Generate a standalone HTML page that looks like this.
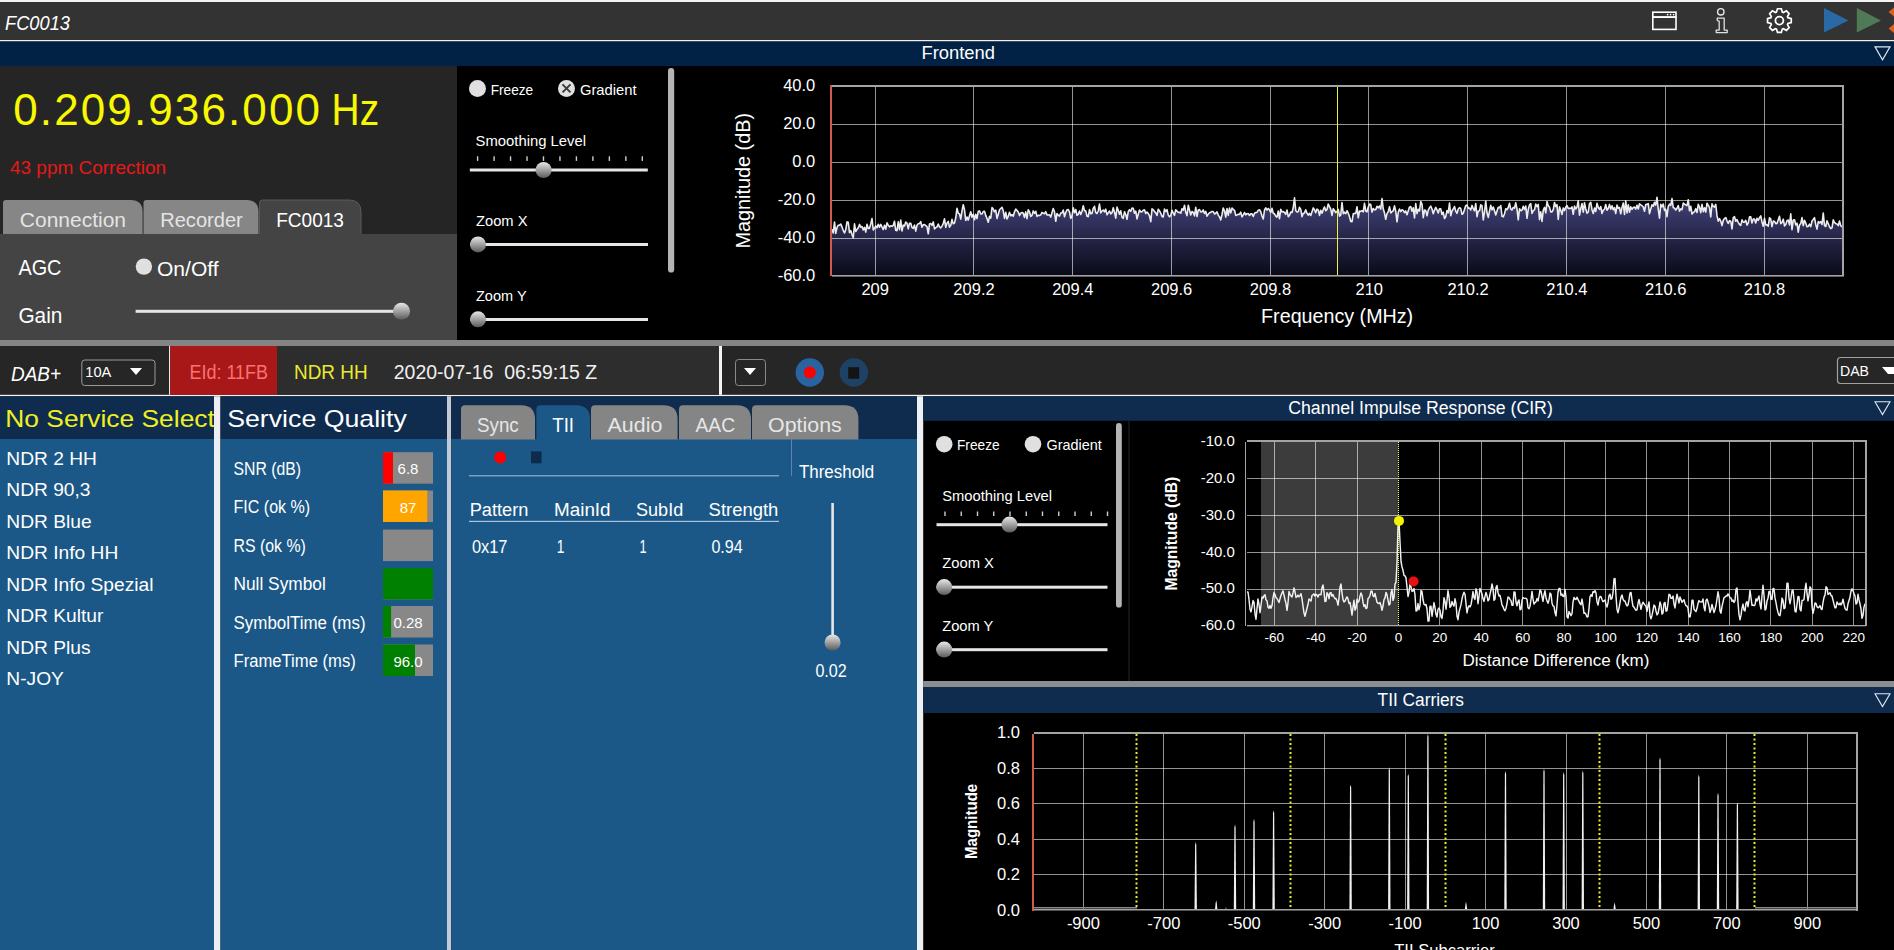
<!DOCTYPE html>
<html><head><meta charset="utf-8"><style>
html,body{margin:0;padding:0;background:#000;overflow:hidden;}
svg{display:block;font-family:"Liberation Sans",sans-serif;}
</style></head><body>
<svg width="1894" height="950" viewBox="0 0 1894 950">
<rect x="0" y="0" width="1894" height="950" fill="#000" />
<rect x="0" y="0" width="1894" height="2" fill="#f4f4f4" />
<rect x="0" y="2" width="1894" height="38" fill="#333333" />
<rect x="0" y="40" width="1894" height="1.5" fill="#f0f0f0" />
<text x="5" y="30" font-size="19.5" fill="#fff" text-anchor="start" font-weight="normal" font-style="italic" textLength="65" lengthAdjust="spacingAndGlyphs" >FC0013</text>
<rect x="1652.8" y="12.2" width="23.2" height="17.2" fill="none" stroke="#fff" stroke-width="1.6"/>
<rect x="1652.5" y="16.1" width="24" height="1.9" fill="#fff" />
<circle cx="1667.6" cy="14.6" r="0.85" fill="#fff" />
<circle cx="1670.6" cy="14.6" r="0.85" fill="#fff" />
<circle cx="1673.6" cy="14.6" r="0.85" fill="#fff" />
<circle cx="1720.8" cy="11.8" r="3.2" fill="none" stroke="#e8e8e8" stroke-width="1.4"/>
<path d="M1717.2 18.2 H1724.2 V30.1 H1727.2 V32.6 H1716.2 V30.1 H1719.2 V21.2 Q1717.2 21.2 1717.2 19.6 Z" fill="none" stroke="#e0e0e0" stroke-width="1.3" stroke-linejoin="round"/>
<path d="M1776.48 12.09 L1777.49 8.75 L1781.31 8.75 L1782.32 12.09 L1783.36 12.52 L1786.43 10.87 L1789.13 13.57 L1787.48 16.64 L1787.91 17.68 L1791.25 18.69 L1791.25 22.51 L1787.91 23.52 L1787.48 24.56 L1789.13 27.63 L1786.43 30.33 L1783.36 28.68 L1782.32 29.11 L1781.31 32.45 L1777.49 32.45 L1776.48 29.11 L1775.44 28.68 L1772.37 30.33 L1769.67 27.63 L1771.32 24.56 L1770.89 23.52 L1767.55 22.51 L1767.55 18.69 L1770.89 17.68 L1771.32 16.64 L1769.67 13.57 L1772.37 10.87 L1775.44 12.52 Z" fill="none" stroke="#fff" stroke-width="1.7" stroke-linejoin="miter"/>
<circle cx="1779.4" cy="20.6" r="4" fill="none" stroke="#fff" stroke-width="1.8"/>
<path d="M1824 8 L1848.5 20.5 L1824 32.6 Z" fill="#2969a5"/>
<path d="M1856.8 8 L1881 20.5 L1856.8 32.6 Z" fill="#4f7a55"/>
<path d="M1894 7.5 L1888.6 12 L1894 16.5 Z M1894 24 L1888.6 28.5 L1894 33 Z" fill="#e0601a"/>
<rect x="0" y="41.5" width="1894" height="24.5" fill="#012244" />
<text x="921.5" y="58.6" font-size="18" fill="#fff" text-anchor="start" font-weight="normal" font-style="normal" textLength="73.5" lengthAdjust="spacingAndGlyphs" >Frontend</text>
<path d="M1875 46.8 L1890 46.8 L1882.5 59.8 Z" fill="none" stroke="#dfe6ee" stroke-width="1.2"/>
<rect x="0" y="66" width="457" height="274" fill="#252525" />
<text x="13.2" y="124.7" font-size="44" fill="#f8f800" textLength="306.8" lengthAdjust="spacing">0.209.936.000</text>
<text x="331.6" y="124.7" font-size="44" fill="#f8f800" text-anchor="start" font-weight="normal" font-style="normal" textLength="47.6" lengthAdjust="spacingAndGlyphs" >Hz</text>
<text x="10" y="174" font-size="18" fill="#e81818" text-anchor="start" font-weight="normal" font-style="normal" textLength="156" lengthAdjust="spacingAndGlyphs" >43 ppm Correction</text>
<path d="M3 234 L3 203 Q3 200 6 200 L130.6 200 Q142.6 200 142.6 212 L142.6 234 Z" fill="#868686"/>
<path d="M143.5 234 L143.5 203 Q143.5 200 146.5 200 L246.5 200 Q258.5 200 258.5 212 L258.5 234 Z" fill="#868686"/>
<rect x="0" y="234" width="457" height="106" fill="#444444" />
<path d="M259.5 234 L259.5 203 Q259.5 200 262.5 200 L349 200 Q361 200 361 212 L361 234 Z" fill="#444444" stroke="#5a5a5a" stroke-width="1"/>
<rect x="260" y="232" width="100.5" height="3" fill="#444444" />
<text x="19.8" y="227.3" font-size="20" fill="#e4e4e4" text-anchor="start" font-weight="normal" font-style="normal" textLength="106.2" lengthAdjust="spacingAndGlyphs" >Connection</text>
<text x="160.2" y="227.3" font-size="20" fill="#e4e4e4" text-anchor="start" font-weight="normal" font-style="normal" textLength="82.6" lengthAdjust="spacingAndGlyphs" >Recorder</text>
<text x="276.2" y="227.3" font-size="20" fill="#ffffff" text-anchor="start" font-weight="normal" font-style="normal" textLength="67.7" lengthAdjust="spacingAndGlyphs" >FC0013</text>
<text x="18.4" y="275" font-size="22" fill="#fff" text-anchor="start" font-weight="normal" font-style="normal" textLength="43.1" lengthAdjust="spacingAndGlyphs" >AGC</text>
<text x="18.4" y="323" font-size="22" fill="#fff" text-anchor="start" font-weight="normal" font-style="normal" textLength="44" lengthAdjust="spacingAndGlyphs" >Gain</text>
<circle cx="143.9" cy="266.6" r="8.2" fill="#e0e0e0" />
<text x="157" y="276" font-size="20" fill="#fff" text-anchor="start" font-weight="normal" font-style="normal" textLength="61.6" lengthAdjust="spacingAndGlyphs" >On/Off</text>
<rect x="135.6" y="309.8" width="265" height="3" fill="#e6e6e6" />
<defs><linearGradient id="thumb" x1="0" y1="0" x2="0" y2="1"><stop offset="0" stop-color="#e8e8e8"/><stop offset="1" stop-color="#5a5a5a"/></linearGradient><linearGradient id="specfill" x1="0" y1="0" x2="0" y2="1"><stop offset="0" stop-color="#43437c"/><stop offset="1" stop-color="#0a0a18"/></linearGradient></defs>
<circle cx="401.5" cy="311.2" r="8.5" fill="url(#thumb)"/>
<circle cx="477.5" cy="88.4" r="8.5" fill="#e0e0e0" />
<text x="490.7" y="94.9" font-size="15" fill="#fff" text-anchor="start" font-weight="normal" font-style="normal" textLength="42.5" lengthAdjust="spacingAndGlyphs" >Freeze</text>
<circle cx="566.5" cy="88.4" r="8.5" fill="#e0e0e0" />
<path d="M562.5 84.4 L570.5 92.4 M570.5 84.4 L562.5 92.4" stroke="#3a3a3a" stroke-width="2"/>
<text x="579.9" y="94.9" font-size="15" fill="#fff" text-anchor="start" font-weight="normal" font-style="normal" textLength="56.7" lengthAdjust="spacingAndGlyphs" >Gradient</text>
<text x="475.6" y="145.9" font-size="15" fill="#fff" text-anchor="start" font-weight="normal" font-style="normal" textLength="110.4" lengthAdjust="spacingAndGlyphs" >Smoothing Level</text>
<rect x="476.90000000000003" y="156.3" width="1.4" height="4.6" fill="#cfcfcf" />
<rect x="493.37000000000006" y="156.3" width="1.4" height="4.6" fill="#cfcfcf" />
<rect x="509.84000000000003" y="156.3" width="1.4" height="4.6" fill="#cfcfcf" />
<rect x="526.31" y="156.3" width="1.4" height="4.6" fill="#cfcfcf" />
<rect x="542.78" y="156.3" width="1.4" height="4.6" fill="#cfcfcf" />
<rect x="559.25" y="156.3" width="1.4" height="4.6" fill="#cfcfcf" />
<rect x="575.72" y="156.3" width="1.4" height="4.6" fill="#cfcfcf" />
<rect x="592.1899999999999" y="156.3" width="1.4" height="4.6" fill="#cfcfcf" />
<rect x="608.66" y="156.3" width="1.4" height="4.6" fill="#cfcfcf" />
<rect x="625.13" y="156.3" width="1.4" height="4.6" fill="#cfcfcf" />
<rect x="641.5999999999999" y="156.3" width="1.4" height="4.6" fill="#cfcfcf" />
<rect x="469.8" y="168.5" width="178" height="3" fill="#e6e6e6" />
<circle cx="543.6" cy="170" r="8" fill="url(#thumb)"/>
<text x="476" y="225.9" font-size="15" fill="#fff" text-anchor="start" font-weight="normal" font-style="normal" textLength="51.5" lengthAdjust="spacingAndGlyphs" >Zoom X</text>
<rect x="470" y="243" width="178" height="3" fill="#e6e6e6" />
<circle cx="478" cy="244.4" r="8" fill="url(#thumb)"/>
<text x="476" y="301" font-size="15" fill="#fff" text-anchor="start" font-weight="normal" font-style="normal" textLength="50.6" lengthAdjust="spacingAndGlyphs" >Zoom Y</text>
<rect x="470" y="318" width="178" height="3" fill="#e6e6e6" />
<circle cx="478" cy="319.3" r="8" fill="url(#thumb)"/>
<rect x="668" y="68" width="6.2" height="204.5" rx="3.1" fill="#b4b4b4"/>
<polygon points="832,275.3 832.00,229.2 833.25,232.9 834.50,222.0 835.75,233.4 837.00,227.7 838.25,225.2 839.50,225.1 840.75,224.1 842.00,226.9 843.25,230.4 844.50,233.0 845.75,229.7 847.00,221.9 848.25,222.3 849.50,232.6 850.75,230.6 852.00,234.6 853.25,237.8 854.50,223.9 855.75,231.5 857.00,229.3 858.25,227.9 859.50,224.4 860.75,227.1 862.00,226.5 863.25,229.9 864.50,227.4 865.75,232.1 867.00,224.3 868.25,228.4 869.50,228.4 870.75,223.9 872.00,218.5 873.25,230.0 874.50,228.3 875.75,226.0 877.00,227.8 878.25,224.3 879.50,227.2 880.75,224.4 882.00,227.0 883.25,229.6 884.50,225.2 885.75,229.1 887.00,222.8 888.25,225.2 889.50,226.8 890.75,225.8 892.00,226.3 893.25,225.4 894.50,221.3 895.75,230.3 897.00,230.6 898.25,221.8 899.50,229.7 900.75,220.1 902.00,231.0 903.25,225.1 904.50,226.0 905.75,222.1 907.00,223.2 908.25,228.8 909.50,223.2 910.75,223.3 912.00,227.6 913.25,228.4 914.50,225.1 915.75,231.2 917.00,225.2 918.25,223.7 919.50,223.5 920.75,221.7 922.00,227.2 923.25,224.8 924.50,224.5 925.75,225.6 927.00,226.7 928.25,233.8 929.50,223.9 930.75,223.5 932.00,225.4 933.25,221.9 934.50,228.9 935.75,227.7 937.00,226.9 938.25,224.1 939.50,226.9 940.75,227.9 942.00,226.1 943.25,223.5 944.50,218.8 945.75,227.4 947.00,223.1 948.25,221.4 949.50,227.1 950.75,225.3 952.00,219.4 953.25,223.7 954.50,223.1 955.75,217.8 957.00,208.2 958.25,213.2 959.50,214.0 960.75,219.1 962.00,210.9 963.25,204.7 964.50,209.8 965.75,220.5 967.00,217.0 968.25,220.1 969.50,215.7 970.75,211.7 972.00,217.2 973.25,214.3 974.50,219.8 975.75,214.3 977.00,218.5 978.25,211.3 979.50,210.9 980.75,214.0 982.00,214.0 983.25,211.5 984.50,211.3 985.75,215.4 987.00,218.6 988.25,222.3 989.50,216.4 990.75,218.2 992.00,207.5 993.25,209.1 994.50,211.8 995.75,210.1 997.00,218.5 998.25,214.3 999.50,209.8 1000.75,208.5 1002.00,207.3 1003.25,210.8 1004.50,218.4 1005.75,212.2 1007.00,219.0 1008.25,216.3 1009.50,212.3 1010.75,215.8 1012.00,214.6 1013.25,216.2 1014.50,211.8 1015.75,209.1 1017.00,210.5 1018.25,212.0 1019.50,215.6 1020.75,213.1 1022.00,212.5 1023.25,213.2 1024.50,217.4 1025.75,211.9 1027.00,218.7 1028.25,209.7 1029.50,211.8 1030.75,216.5 1032.00,215.4 1033.25,210.9 1034.50,213.3 1035.75,211.3 1037.00,216.4 1038.25,215.4 1039.50,215.5 1040.75,214.9 1042.00,212.4 1043.25,213.3 1044.50,213.8 1045.75,211.7 1047.00,214.9 1048.25,215.0 1049.50,214.9 1050.75,217.1 1052.00,212.6 1053.25,208.6 1054.50,211.8 1055.75,221.3 1057.00,213.5 1058.25,215.3 1059.50,216.1 1060.75,213.0 1062.00,213.0 1063.25,210.1 1064.50,216.8 1065.75,212.5 1067.00,209.8 1068.25,209.6 1069.50,211.9 1070.75,218.4 1072.00,215.8 1073.25,207.7 1074.50,212.8 1075.75,209.5 1077.00,215.3 1078.25,214.3 1079.50,211.1 1080.75,214.5 1082.00,211.3 1083.25,205.8 1084.50,210.8 1085.75,210.9 1087.00,216.3 1088.25,216.6 1089.50,209.6 1090.75,213.7 1092.00,213.4 1093.25,208.3 1094.50,206.3 1095.75,212.7 1097.00,213.5 1098.25,211.0 1099.50,204.0 1100.75,212.9 1102.00,211.0 1103.25,210.0 1104.50,211.9 1105.75,209.2 1107.00,214.8 1108.25,212.9 1109.50,211.0 1110.75,213.8 1112.00,212.7 1113.25,207.8 1114.50,212.4 1115.75,218.1 1117.00,207.1 1118.25,210.6 1119.50,214.2 1120.75,210.7 1122.00,217.4 1123.25,218.3 1124.50,211.7 1125.75,214.5 1127.00,219.3 1128.25,211.6 1129.50,209.7 1130.75,211.3 1132.00,208.1 1133.25,208.2 1134.50,213.3 1135.75,211.2 1137.00,218.9 1138.25,214.2 1139.50,210.0 1140.75,211.9 1142.00,211.7 1143.25,210.3 1144.50,209.8 1145.75,213.5 1147.00,212.0 1148.25,213.6 1149.50,215.8 1150.75,221.7 1152.00,208.8 1153.25,209.6 1154.50,211.6 1155.75,212.8 1157.00,215.5 1158.25,209.2 1159.50,210.9 1160.75,213.2 1162.00,216.4 1163.25,216.9 1164.50,209.0 1165.75,211.6 1167.00,209.6 1168.25,215.1 1169.50,216.8 1170.75,215.4 1172.00,210.2 1173.25,213.2 1174.50,215.4 1175.75,209.7 1177.00,211.1 1178.25,212.5 1179.50,212.2 1180.75,213.2 1182.00,208.8 1183.25,210.1 1184.50,205.2 1185.75,212.3 1187.00,215.6 1188.25,205.3 1189.50,210.0 1190.75,215.0 1192.00,211.5 1193.25,212.4 1194.50,215.8 1195.75,207.3 1197.00,216.5 1198.25,210.0 1199.50,209.6 1200.75,212.0 1202.00,211.8 1203.25,209.9 1204.50,213.5 1205.75,211.4 1207.00,216.2 1208.25,214.2 1209.50,212.7 1210.75,212.3 1212.00,211.5 1213.25,211.5 1214.50,214.0 1215.75,213.3 1217.00,211.9 1218.25,215.1 1219.50,216.9 1220.75,219.9 1222.00,214.5 1223.25,208.0 1224.50,210.8 1225.75,217.2 1227.00,208.5 1228.25,215.4 1229.50,208.1 1230.75,212.9 1232.00,208.1 1233.25,209.5 1234.50,210.3 1235.75,215.4 1237.00,214.9 1238.25,214.3 1239.50,214.4 1240.75,212.1 1242.00,216.9 1243.25,214.9 1244.50,212.5 1245.75,214.8 1247.00,213.7 1248.25,213.6 1249.50,215.5 1250.75,213.8 1252.00,213.9 1253.25,216.5 1254.50,213.2 1255.75,212.5 1257.00,212.4 1258.25,210.2 1259.50,209.8 1260.75,211.7 1262.00,216.0 1263.25,218.9 1264.50,210.0 1265.75,207.8 1267.00,210.1 1268.25,208.5 1269.50,209.8 1270.75,212.5 1272.00,208.2 1273.25,213.2 1274.50,213.8 1275.75,216.1 1277.00,217.1 1278.25,211.0 1279.50,218.6 1280.75,209.4 1282.00,212.0 1283.25,211.6 1284.50,212.5 1285.75,214.4 1287.00,210.0 1288.25,216.7 1289.50,215.2 1290.75,212.1 1292.00,212.5 1293.25,207.8 1294.50,197.9 1295.75,210.7 1297.00,212.0 1298.25,211.7 1299.50,207.3 1300.75,209.4 1302.00,216.7 1303.25,213.3 1304.50,212.9 1305.75,209.8 1307.00,213.3 1308.25,215.1 1309.50,213.3 1310.75,215.5 1312.00,211.7 1313.25,207.9 1314.50,209.8 1315.75,212.7 1317.00,209.0 1318.25,210.0 1319.50,215.4 1320.75,210.2 1322.00,213.2 1323.25,209.7 1324.50,206.9 1325.75,210.7 1327.00,209.5 1328.25,204.0 1329.50,206.7 1330.75,209.2 1332.00,215.4 1333.25,208.7 1334.50,210.5 1335.75,212.6 1337.00,211.5 1338.25,209.4 1339.50,216.1 1340.75,214.9 1342.00,202.5 1343.25,213.6 1344.50,212.2 1345.75,213.7 1347.00,210.7 1348.25,213.1 1349.50,216.7 1350.75,221.5 1352.00,221.6 1353.25,213.8 1354.50,213.4 1355.75,213.4 1357.00,206.7 1358.25,217.8 1359.50,211.1 1360.75,211.4 1362.00,210.7 1363.25,211.8 1364.50,203.3 1365.75,211.0 1367.00,211.9 1368.25,207.0 1369.50,204.1 1370.75,204.6 1372.00,212.1 1373.25,208.6 1374.50,209.8 1375.75,209.6 1377.00,206.3 1378.25,207.8 1379.50,206.0 1380.75,209.1 1382.00,198.5 1383.25,208.8 1384.50,213.0 1385.75,219.3 1387.00,213.7 1388.25,211.6 1389.50,206.7 1390.75,212.9 1392.00,211.6 1393.25,210.8 1394.50,205.9 1395.75,211.2 1397.00,221.8 1398.25,212.3 1399.50,209.1 1400.75,211.6 1402.00,209.8 1403.25,210.4 1404.50,212.6 1405.75,210.9 1407.00,214.8 1408.25,211.0 1409.50,207.1 1410.75,206.5 1412.00,211.3 1413.25,207.8 1414.50,217.9 1415.75,203.6 1417.00,213.6 1418.25,209.3 1419.50,211.0 1420.75,201.5 1422.00,204.1 1423.25,217.6 1424.50,210.1 1425.75,210.6 1427.00,215.8 1428.25,210.1 1429.50,207.8 1430.75,206.2 1432.00,209.0 1433.25,213.8 1434.50,210.1 1435.75,207.4 1437.00,209.8 1438.25,212.9 1439.50,208.8 1440.75,208.8 1442.00,214.5 1443.25,212.2 1444.50,218.5 1445.75,216.7 1447.00,210.5 1448.25,212.8 1449.50,203.1 1450.75,215.7 1452.00,210.8 1453.25,209.0 1454.50,206.5 1455.75,211.2 1457.00,213.4 1458.25,209.0 1459.50,207.7 1460.75,208.5 1462.00,214.3 1463.25,213.3 1464.50,209.4 1465.75,205.6 1467.00,205.0 1468.25,208.1 1469.50,208.1 1470.75,210.0 1472.00,205.4 1473.25,208.7 1474.50,210.9 1475.75,203.6 1477.00,216.7 1478.25,211.0 1479.50,210.8 1480.75,204.8 1482.00,205.7 1483.25,220.0 1484.50,212.0 1485.75,201.0 1487.00,212.8 1488.25,217.4 1489.50,211.1 1490.75,205.3 1492.00,209.8 1493.25,207.0 1494.50,210.8 1495.75,215.0 1497.00,211.0 1498.25,207.3 1499.50,207.9 1500.75,205.5 1502.00,216.3 1503.25,216.9 1504.50,213.7 1505.75,208.7 1507.00,209.7 1508.25,207.5 1509.50,203.2 1510.75,209.1 1512.00,210.0 1513.25,207.4 1514.50,208.2 1515.75,202.8 1517.00,208.9 1518.25,219.8 1519.50,208.7 1520.75,210.7 1522.00,210.2 1523.25,206.2 1524.50,209.4 1525.75,206.0 1527.00,218.3 1528.25,209.3 1529.50,205.0 1530.75,203.6 1532.00,213.5 1533.25,210.6 1534.50,209.9 1535.75,204.1 1537.00,206.7 1538.25,204.5 1539.50,219.7 1540.75,211.7 1542.00,221.4 1543.25,210.2 1544.50,207.4 1545.75,212.9 1547.00,201.5 1548.25,205.7 1549.50,207.1 1550.75,211.9 1552.00,211.9 1553.25,209.6 1554.50,202.5 1555.75,206.6 1557.00,204.7 1558.25,219.5 1559.50,206.9 1560.75,210.2 1562.00,214.4 1563.25,208.0 1564.50,210.6 1565.75,207.0 1567.00,205.6 1568.25,208.4 1569.50,208.3 1570.75,208.4 1572.00,206.9 1573.25,214.3 1574.50,206.0 1575.75,209.0 1577.00,207.1 1578.25,200.7 1579.50,215.2 1580.75,208.8 1582.00,203.5 1583.25,212.1 1584.50,202.7 1585.75,209.0 1587.00,213.2 1588.25,212.0 1589.50,203.7 1590.75,202.3 1592.00,209.7 1593.25,213.5 1594.50,208.1 1595.75,211.4 1597.00,203.3 1598.25,207.5 1599.50,209.3 1600.75,206.5 1602.00,213.5 1603.25,210.1 1604.50,209.3 1605.75,204.5 1607.00,210.2 1608.25,208.5 1609.50,204.4 1610.75,209.1 1612.00,205.8 1613.25,209.8 1614.50,207.6 1615.75,213.5 1617.00,205.1 1618.25,208.3 1619.50,207.5 1620.75,213.8 1622.00,207.4 1623.25,203.1 1624.50,214.4 1625.75,200.8 1627.00,213.0 1628.25,204.7 1629.50,212.1 1630.75,206.9 1632.00,209.3 1633.25,207.5 1634.50,207.1 1635.75,209.1 1637.00,205.3 1638.25,209.0 1639.50,203.8 1640.75,204.9 1642.00,205.7 1643.25,207.0 1644.50,211.3 1645.75,204.5 1647.00,204.4 1648.25,203.6 1649.50,213.6 1650.75,209.1 1652.00,204.8 1653.25,206.2 1654.50,202.2 1655.75,205.1 1657.00,197.4 1658.25,209.1 1659.50,218.1 1660.75,204.4 1662.00,206.9 1663.25,204.1 1664.50,210.4 1665.75,209.2 1667.00,216.6 1668.25,206.4 1669.50,204.1 1670.75,205.4 1672.00,198.6 1673.25,207.7 1674.50,208.0 1675.75,210.0 1677.00,208.3 1678.25,205.6 1679.50,211.2 1680.75,208.9 1682.00,209.7 1683.25,203.1 1684.50,204.2 1685.75,204.8 1687.00,205.6 1688.25,199.7 1689.50,210.8 1690.75,206.2 1692.00,214.0 1693.25,212.4 1694.50,211.8 1695.75,208.7 1697.00,212.4 1698.25,204.4 1699.50,207.2 1700.75,212.6 1702.00,204.4 1703.25,211.7 1704.50,207.7 1705.75,212.1 1707.00,203.2 1708.25,205.3 1709.50,207.3 1710.75,217.0 1712.00,203.9 1713.25,206.3 1714.50,207.1 1715.75,204.4 1717.00,215.7 1718.25,221.1 1719.50,218.6 1720.75,221.0 1722.00,225.6 1723.25,220.3 1724.50,218.5 1725.75,217.5 1727.00,220.8 1728.25,223.5 1729.50,220.6 1730.75,221.2 1732.00,228.9 1733.25,217.7 1734.50,216.7 1735.75,221.2 1737.00,219.6 1738.25,222.3 1739.50,224.5 1740.75,225.4 1742.00,219.8 1743.25,222.2 1744.50,222.1 1745.75,220.3 1747.00,225.1 1748.25,222.9 1749.50,216.8 1750.75,216.9 1752.00,223.0 1753.25,219.1 1754.50,219.0 1755.75,223.0 1757.00,218.3 1758.25,220.3 1759.50,217.7 1760.75,215.9 1762.00,222.0 1763.25,226.2 1764.50,218.2 1765.75,224.9 1767.00,224.7 1768.25,226.1 1769.50,217.7 1770.75,219.1 1772.00,226.7 1773.25,221.1 1774.50,221.3 1775.75,223.7 1777.00,223.4 1778.25,219.7 1779.50,216.3 1780.75,223.7 1782.00,222.5 1783.25,219.2 1784.50,225.9 1785.75,224.5 1787.00,220.7 1788.25,220.0 1789.50,224.9 1790.75,213.9 1792.00,229.7 1793.25,220.0 1794.50,219.8 1795.75,224.9 1797.00,223.1 1798.25,232.2 1799.50,224.9 1800.75,223.4 1802.00,217.6 1803.25,225.6 1804.50,220.3 1805.75,223.1 1807.00,226.7 1808.25,226.3 1809.50,224.1 1810.75,226.7 1812.00,221.1 1813.25,219.5 1814.50,217.6 1815.75,224.5 1817.00,229.1 1818.25,221.6 1819.50,222.8 1820.75,221.7 1822.00,224.4 1823.25,213.1 1824.50,225.7 1825.75,226.5 1827.00,220.7 1828.25,223.7 1829.50,226.8 1830.75,228.6 1832.00,227.8 1833.25,219.8 1834.50,222.6 1835.75,223.5 1837.00,224.1 1838.25,225.6 1839.50,221.0 1840.75,225.7 1842.00,227.0 1842,275.3" fill="url(#specfill)"/>
<rect x="832" y="124" width="1010" height="1" fill="rgba(255,255,255,0.58)" />
<rect x="832" y="162" width="1010" height="1" fill="rgba(255,255,255,0.58)" />
<rect x="832" y="200" width="1010" height="1" fill="rgba(255,255,255,0.58)" />
<rect x="832" y="238" width="1010" height="1" fill="rgba(255,255,255,0.58)" />
<rect x="875" y="87" width="1" height="188" fill="rgba(255,255,255,0.58)" />
<rect x="973" y="87" width="1" height="188" fill="rgba(255,255,255,0.58)" />
<rect x="1072" y="87" width="1" height="188" fill="rgba(255,255,255,0.58)" />
<rect x="1171" y="87" width="1" height="188" fill="rgba(255,255,255,0.58)" />
<rect x="1270" y="87" width="1" height="188" fill="rgba(255,255,255,0.58)" />
<rect x="1368" y="87" width="1" height="188" fill="rgba(255,255,255,0.58)" />
<rect x="1467" y="87" width="1" height="188" fill="rgba(255,255,255,0.58)" />
<rect x="1566" y="87" width="1" height="188" fill="rgba(255,255,255,0.58)" />
<rect x="1665" y="87" width="1" height="188" fill="rgba(255,255,255,0.58)" />
<rect x="1764" y="87" width="1" height="188" fill="rgba(255,255,255,0.58)" />
<polyline points="832.00,229.2 833.25,232.9 834.50,222.0 835.75,233.4 837.00,227.7 838.25,225.2 839.50,225.1 840.75,224.1 842.00,226.9 843.25,230.4 844.50,233.0 845.75,229.7 847.00,221.9 848.25,222.3 849.50,232.6 850.75,230.6 852.00,234.6 853.25,237.8 854.50,223.9 855.75,231.5 857.00,229.3 858.25,227.9 859.50,224.4 860.75,227.1 862.00,226.5 863.25,229.9 864.50,227.4 865.75,232.1 867.00,224.3 868.25,228.4 869.50,228.4 870.75,223.9 872.00,218.5 873.25,230.0 874.50,228.3 875.75,226.0 877.00,227.8 878.25,224.3 879.50,227.2 880.75,224.4 882.00,227.0 883.25,229.6 884.50,225.2 885.75,229.1 887.00,222.8 888.25,225.2 889.50,226.8 890.75,225.8 892.00,226.3 893.25,225.4 894.50,221.3 895.75,230.3 897.00,230.6 898.25,221.8 899.50,229.7 900.75,220.1 902.00,231.0 903.25,225.1 904.50,226.0 905.75,222.1 907.00,223.2 908.25,228.8 909.50,223.2 910.75,223.3 912.00,227.6 913.25,228.4 914.50,225.1 915.75,231.2 917.00,225.2 918.25,223.7 919.50,223.5 920.75,221.7 922.00,227.2 923.25,224.8 924.50,224.5 925.75,225.6 927.00,226.7 928.25,233.8 929.50,223.9 930.75,223.5 932.00,225.4 933.25,221.9 934.50,228.9 935.75,227.7 937.00,226.9 938.25,224.1 939.50,226.9 940.75,227.9 942.00,226.1 943.25,223.5 944.50,218.8 945.75,227.4 947.00,223.1 948.25,221.4 949.50,227.1 950.75,225.3 952.00,219.4 953.25,223.7 954.50,223.1 955.75,217.8 957.00,208.2 958.25,213.2 959.50,214.0 960.75,219.1 962.00,210.9 963.25,204.7 964.50,209.8 965.75,220.5 967.00,217.0 968.25,220.1 969.50,215.7 970.75,211.7 972.00,217.2 973.25,214.3 974.50,219.8 975.75,214.3 977.00,218.5 978.25,211.3 979.50,210.9 980.75,214.0 982.00,214.0 983.25,211.5 984.50,211.3 985.75,215.4 987.00,218.6 988.25,222.3 989.50,216.4 990.75,218.2 992.00,207.5 993.25,209.1 994.50,211.8 995.75,210.1 997.00,218.5 998.25,214.3 999.50,209.8 1000.75,208.5 1002.00,207.3 1003.25,210.8 1004.50,218.4 1005.75,212.2 1007.00,219.0 1008.25,216.3 1009.50,212.3 1010.75,215.8 1012.00,214.6 1013.25,216.2 1014.50,211.8 1015.75,209.1 1017.00,210.5 1018.25,212.0 1019.50,215.6 1020.75,213.1 1022.00,212.5 1023.25,213.2 1024.50,217.4 1025.75,211.9 1027.00,218.7 1028.25,209.7 1029.50,211.8 1030.75,216.5 1032.00,215.4 1033.25,210.9 1034.50,213.3 1035.75,211.3 1037.00,216.4 1038.25,215.4 1039.50,215.5 1040.75,214.9 1042.00,212.4 1043.25,213.3 1044.50,213.8 1045.75,211.7 1047.00,214.9 1048.25,215.0 1049.50,214.9 1050.75,217.1 1052.00,212.6 1053.25,208.6 1054.50,211.8 1055.75,221.3 1057.00,213.5 1058.25,215.3 1059.50,216.1 1060.75,213.0 1062.00,213.0 1063.25,210.1 1064.50,216.8 1065.75,212.5 1067.00,209.8 1068.25,209.6 1069.50,211.9 1070.75,218.4 1072.00,215.8 1073.25,207.7 1074.50,212.8 1075.75,209.5 1077.00,215.3 1078.25,214.3 1079.50,211.1 1080.75,214.5 1082.00,211.3 1083.25,205.8 1084.50,210.8 1085.75,210.9 1087.00,216.3 1088.25,216.6 1089.50,209.6 1090.75,213.7 1092.00,213.4 1093.25,208.3 1094.50,206.3 1095.75,212.7 1097.00,213.5 1098.25,211.0 1099.50,204.0 1100.75,212.9 1102.00,211.0 1103.25,210.0 1104.50,211.9 1105.75,209.2 1107.00,214.8 1108.25,212.9 1109.50,211.0 1110.75,213.8 1112.00,212.7 1113.25,207.8 1114.50,212.4 1115.75,218.1 1117.00,207.1 1118.25,210.6 1119.50,214.2 1120.75,210.7 1122.00,217.4 1123.25,218.3 1124.50,211.7 1125.75,214.5 1127.00,219.3 1128.25,211.6 1129.50,209.7 1130.75,211.3 1132.00,208.1 1133.25,208.2 1134.50,213.3 1135.75,211.2 1137.00,218.9 1138.25,214.2 1139.50,210.0 1140.75,211.9 1142.00,211.7 1143.25,210.3 1144.50,209.8 1145.75,213.5 1147.00,212.0 1148.25,213.6 1149.50,215.8 1150.75,221.7 1152.00,208.8 1153.25,209.6 1154.50,211.6 1155.75,212.8 1157.00,215.5 1158.25,209.2 1159.50,210.9 1160.75,213.2 1162.00,216.4 1163.25,216.9 1164.50,209.0 1165.75,211.6 1167.00,209.6 1168.25,215.1 1169.50,216.8 1170.75,215.4 1172.00,210.2 1173.25,213.2 1174.50,215.4 1175.75,209.7 1177.00,211.1 1178.25,212.5 1179.50,212.2 1180.75,213.2 1182.00,208.8 1183.25,210.1 1184.50,205.2 1185.75,212.3 1187.00,215.6 1188.25,205.3 1189.50,210.0 1190.75,215.0 1192.00,211.5 1193.25,212.4 1194.50,215.8 1195.75,207.3 1197.00,216.5 1198.25,210.0 1199.50,209.6 1200.75,212.0 1202.00,211.8 1203.25,209.9 1204.50,213.5 1205.75,211.4 1207.00,216.2 1208.25,214.2 1209.50,212.7 1210.75,212.3 1212.00,211.5 1213.25,211.5 1214.50,214.0 1215.75,213.3 1217.00,211.9 1218.25,215.1 1219.50,216.9 1220.75,219.9 1222.00,214.5 1223.25,208.0 1224.50,210.8 1225.75,217.2 1227.00,208.5 1228.25,215.4 1229.50,208.1 1230.75,212.9 1232.00,208.1 1233.25,209.5 1234.50,210.3 1235.75,215.4 1237.00,214.9 1238.25,214.3 1239.50,214.4 1240.75,212.1 1242.00,216.9 1243.25,214.9 1244.50,212.5 1245.75,214.8 1247.00,213.7 1248.25,213.6 1249.50,215.5 1250.75,213.8 1252.00,213.9 1253.25,216.5 1254.50,213.2 1255.75,212.5 1257.00,212.4 1258.25,210.2 1259.50,209.8 1260.75,211.7 1262.00,216.0 1263.25,218.9 1264.50,210.0 1265.75,207.8 1267.00,210.1 1268.25,208.5 1269.50,209.8 1270.75,212.5 1272.00,208.2 1273.25,213.2 1274.50,213.8 1275.75,216.1 1277.00,217.1 1278.25,211.0 1279.50,218.6 1280.75,209.4 1282.00,212.0 1283.25,211.6 1284.50,212.5 1285.75,214.4 1287.00,210.0 1288.25,216.7 1289.50,215.2 1290.75,212.1 1292.00,212.5 1293.25,207.8 1294.50,197.9 1295.75,210.7 1297.00,212.0 1298.25,211.7 1299.50,207.3 1300.75,209.4 1302.00,216.7 1303.25,213.3 1304.50,212.9 1305.75,209.8 1307.00,213.3 1308.25,215.1 1309.50,213.3 1310.75,215.5 1312.00,211.7 1313.25,207.9 1314.50,209.8 1315.75,212.7 1317.00,209.0 1318.25,210.0 1319.50,215.4 1320.75,210.2 1322.00,213.2 1323.25,209.7 1324.50,206.9 1325.75,210.7 1327.00,209.5 1328.25,204.0 1329.50,206.7 1330.75,209.2 1332.00,215.4 1333.25,208.7 1334.50,210.5 1335.75,212.6 1337.00,211.5 1338.25,209.4 1339.50,216.1 1340.75,214.9 1342.00,202.5 1343.25,213.6 1344.50,212.2 1345.75,213.7 1347.00,210.7 1348.25,213.1 1349.50,216.7 1350.75,221.5 1352.00,221.6 1353.25,213.8 1354.50,213.4 1355.75,213.4 1357.00,206.7 1358.25,217.8 1359.50,211.1 1360.75,211.4 1362.00,210.7 1363.25,211.8 1364.50,203.3 1365.75,211.0 1367.00,211.9 1368.25,207.0 1369.50,204.1 1370.75,204.6 1372.00,212.1 1373.25,208.6 1374.50,209.8 1375.75,209.6 1377.00,206.3 1378.25,207.8 1379.50,206.0 1380.75,209.1 1382.00,198.5 1383.25,208.8 1384.50,213.0 1385.75,219.3 1387.00,213.7 1388.25,211.6 1389.50,206.7 1390.75,212.9 1392.00,211.6 1393.25,210.8 1394.50,205.9 1395.75,211.2 1397.00,221.8 1398.25,212.3 1399.50,209.1 1400.75,211.6 1402.00,209.8 1403.25,210.4 1404.50,212.6 1405.75,210.9 1407.00,214.8 1408.25,211.0 1409.50,207.1 1410.75,206.5 1412.00,211.3 1413.25,207.8 1414.50,217.9 1415.75,203.6 1417.00,213.6 1418.25,209.3 1419.50,211.0 1420.75,201.5 1422.00,204.1 1423.25,217.6 1424.50,210.1 1425.75,210.6 1427.00,215.8 1428.25,210.1 1429.50,207.8 1430.75,206.2 1432.00,209.0 1433.25,213.8 1434.50,210.1 1435.75,207.4 1437.00,209.8 1438.25,212.9 1439.50,208.8 1440.75,208.8 1442.00,214.5 1443.25,212.2 1444.50,218.5 1445.75,216.7 1447.00,210.5 1448.25,212.8 1449.50,203.1 1450.75,215.7 1452.00,210.8 1453.25,209.0 1454.50,206.5 1455.75,211.2 1457.00,213.4 1458.25,209.0 1459.50,207.7 1460.75,208.5 1462.00,214.3 1463.25,213.3 1464.50,209.4 1465.75,205.6 1467.00,205.0 1468.25,208.1 1469.50,208.1 1470.75,210.0 1472.00,205.4 1473.25,208.7 1474.50,210.9 1475.75,203.6 1477.00,216.7 1478.25,211.0 1479.50,210.8 1480.75,204.8 1482.00,205.7 1483.25,220.0 1484.50,212.0 1485.75,201.0 1487.00,212.8 1488.25,217.4 1489.50,211.1 1490.75,205.3 1492.00,209.8 1493.25,207.0 1494.50,210.8 1495.75,215.0 1497.00,211.0 1498.25,207.3 1499.50,207.9 1500.75,205.5 1502.00,216.3 1503.25,216.9 1504.50,213.7 1505.75,208.7 1507.00,209.7 1508.25,207.5 1509.50,203.2 1510.75,209.1 1512.00,210.0 1513.25,207.4 1514.50,208.2 1515.75,202.8 1517.00,208.9 1518.25,219.8 1519.50,208.7 1520.75,210.7 1522.00,210.2 1523.25,206.2 1524.50,209.4 1525.75,206.0 1527.00,218.3 1528.25,209.3 1529.50,205.0 1530.75,203.6 1532.00,213.5 1533.25,210.6 1534.50,209.9 1535.75,204.1 1537.00,206.7 1538.25,204.5 1539.50,219.7 1540.75,211.7 1542.00,221.4 1543.25,210.2 1544.50,207.4 1545.75,212.9 1547.00,201.5 1548.25,205.7 1549.50,207.1 1550.75,211.9 1552.00,211.9 1553.25,209.6 1554.50,202.5 1555.75,206.6 1557.00,204.7 1558.25,219.5 1559.50,206.9 1560.75,210.2 1562.00,214.4 1563.25,208.0 1564.50,210.6 1565.75,207.0 1567.00,205.6 1568.25,208.4 1569.50,208.3 1570.75,208.4 1572.00,206.9 1573.25,214.3 1574.50,206.0 1575.75,209.0 1577.00,207.1 1578.25,200.7 1579.50,215.2 1580.75,208.8 1582.00,203.5 1583.25,212.1 1584.50,202.7 1585.75,209.0 1587.00,213.2 1588.25,212.0 1589.50,203.7 1590.75,202.3 1592.00,209.7 1593.25,213.5 1594.50,208.1 1595.75,211.4 1597.00,203.3 1598.25,207.5 1599.50,209.3 1600.75,206.5 1602.00,213.5 1603.25,210.1 1604.50,209.3 1605.75,204.5 1607.00,210.2 1608.25,208.5 1609.50,204.4 1610.75,209.1 1612.00,205.8 1613.25,209.8 1614.50,207.6 1615.75,213.5 1617.00,205.1 1618.25,208.3 1619.50,207.5 1620.75,213.8 1622.00,207.4 1623.25,203.1 1624.50,214.4 1625.75,200.8 1627.00,213.0 1628.25,204.7 1629.50,212.1 1630.75,206.9 1632.00,209.3 1633.25,207.5 1634.50,207.1 1635.75,209.1 1637.00,205.3 1638.25,209.0 1639.50,203.8 1640.75,204.9 1642.00,205.7 1643.25,207.0 1644.50,211.3 1645.75,204.5 1647.00,204.4 1648.25,203.6 1649.50,213.6 1650.75,209.1 1652.00,204.8 1653.25,206.2 1654.50,202.2 1655.75,205.1 1657.00,197.4 1658.25,209.1 1659.50,218.1 1660.75,204.4 1662.00,206.9 1663.25,204.1 1664.50,210.4 1665.75,209.2 1667.00,216.6 1668.25,206.4 1669.50,204.1 1670.75,205.4 1672.00,198.6 1673.25,207.7 1674.50,208.0 1675.75,210.0 1677.00,208.3 1678.25,205.6 1679.50,211.2 1680.75,208.9 1682.00,209.7 1683.25,203.1 1684.50,204.2 1685.75,204.8 1687.00,205.6 1688.25,199.7 1689.50,210.8 1690.75,206.2 1692.00,214.0 1693.25,212.4 1694.50,211.8 1695.75,208.7 1697.00,212.4 1698.25,204.4 1699.50,207.2 1700.75,212.6 1702.00,204.4 1703.25,211.7 1704.50,207.7 1705.75,212.1 1707.00,203.2 1708.25,205.3 1709.50,207.3 1710.75,217.0 1712.00,203.9 1713.25,206.3 1714.50,207.1 1715.75,204.4 1717.00,215.7 1718.25,221.1 1719.50,218.6 1720.75,221.0 1722.00,225.6 1723.25,220.3 1724.50,218.5 1725.75,217.5 1727.00,220.8 1728.25,223.5 1729.50,220.6 1730.75,221.2 1732.00,228.9 1733.25,217.7 1734.50,216.7 1735.75,221.2 1737.00,219.6 1738.25,222.3 1739.50,224.5 1740.75,225.4 1742.00,219.8 1743.25,222.2 1744.50,222.1 1745.75,220.3 1747.00,225.1 1748.25,222.9 1749.50,216.8 1750.75,216.9 1752.00,223.0 1753.25,219.1 1754.50,219.0 1755.75,223.0 1757.00,218.3 1758.25,220.3 1759.50,217.7 1760.75,215.9 1762.00,222.0 1763.25,226.2 1764.50,218.2 1765.75,224.9 1767.00,224.7 1768.25,226.1 1769.50,217.7 1770.75,219.1 1772.00,226.7 1773.25,221.1 1774.50,221.3 1775.75,223.7 1777.00,223.4 1778.25,219.7 1779.50,216.3 1780.75,223.7 1782.00,222.5 1783.25,219.2 1784.50,225.9 1785.75,224.5 1787.00,220.7 1788.25,220.0 1789.50,224.9 1790.75,213.9 1792.00,229.7 1793.25,220.0 1794.50,219.8 1795.75,224.9 1797.00,223.1 1798.25,232.2 1799.50,224.9 1800.75,223.4 1802.00,217.6 1803.25,225.6 1804.50,220.3 1805.75,223.1 1807.00,226.7 1808.25,226.3 1809.50,224.1 1810.75,226.7 1812.00,221.1 1813.25,219.5 1814.50,217.6 1815.75,224.5 1817.00,229.1 1818.25,221.6 1819.50,222.8 1820.75,221.7 1822.00,224.4 1823.25,213.1 1824.50,225.7 1825.75,226.5 1827.00,220.7 1828.25,223.7 1829.50,226.8 1830.75,228.6 1832.00,227.8 1833.25,219.8 1834.50,222.6 1835.75,223.5 1837.00,224.1 1838.25,225.6 1839.50,221.0 1840.75,225.7 1842.00,227.0" fill="none" stroke="#ececec" stroke-width="1.6" stroke-linejoin="round"/>
<rect x="832" y="85" width="1012" height="2" fill="#a4a4a4" />
<rect x="832" y="275" width="1012" height="1.6" fill="#a4a4a4" />
<rect x="1842" y="85" width="2" height="191" fill="#a4a4a4" />
<rect x="830" y="85" width="2" height="191" fill="#d25a4b" />
<rect x="1337" y="87" width="1" height="188" fill="#f0f040" />
<text x="815.3" y="91.2" font-size="16.5" fill="#fff" text-anchor="end" font-weight="normal" font-style="normal" >40.0</text>
<text x="815.3" y="129.1" font-size="16.5" fill="#fff" text-anchor="end" font-weight="normal" font-style="normal" >20.0</text>
<text x="815.3" y="167.0" font-size="16.5" fill="#fff" text-anchor="end" font-weight="normal" font-style="normal" >0.0</text>
<text x="815.3" y="204.9" font-size="16.5" fill="#fff" text-anchor="end" font-weight="normal" font-style="normal" >-20.0</text>
<text x="815.3" y="242.79999999999998" font-size="16.5" fill="#fff" text-anchor="end" font-weight="normal" font-style="normal" >-40.0</text>
<text x="815.3" y="280.7" font-size="16.5" fill="#fff" text-anchor="end" font-weight="normal" font-style="normal" >-60.0</text>
<text x="875.2" y="294.5" font-size="16.5" fill="#fff" text-anchor="middle" font-weight="normal" font-style="normal" >209</text>
<text x="974.0111111111112" y="294.5" font-size="16.5" fill="#fff" text-anchor="middle" font-weight="normal" font-style="normal" >209.2</text>
<text x="1072.8222222222223" y="294.5" font-size="16.5" fill="#fff" text-anchor="middle" font-weight="normal" font-style="normal" >209.4</text>
<text x="1171.6333333333332" y="294.5" font-size="16.5" fill="#fff" text-anchor="middle" font-weight="normal" font-style="normal" >209.6</text>
<text x="1270.4444444444443" y="294.5" font-size="16.5" fill="#fff" text-anchor="middle" font-weight="normal" font-style="normal" >209.8</text>
<text x="1369.2555555555555" y="294.5" font-size="16.5" fill="#fff" text-anchor="middle" font-weight="normal" font-style="normal" >210</text>
<text x="1468.0666666666666" y="294.5" font-size="16.5" fill="#fff" text-anchor="middle" font-weight="normal" font-style="normal" >210.2</text>
<text x="1566.8777777777777" y="294.5" font-size="16.5" fill="#fff" text-anchor="middle" font-weight="normal" font-style="normal" >210.4</text>
<text x="1665.6888888888889" y="294.5" font-size="16.5" fill="#fff" text-anchor="middle" font-weight="normal" font-style="normal" >210.6</text>
<text x="1764.5" y="294.5" font-size="16.5" fill="#fff" text-anchor="middle" font-weight="normal" font-style="normal" >210.8</text>
<text x="1261.1" y="322.8" font-size="20" fill="#fff" text-anchor="start" font-weight="normal" font-style="normal" textLength="152.1" lengthAdjust="spacingAndGlyphs" >Frequency (MHz)</text>
<text x="0" y="0" font-size="20" fill="#fff" textLength="135.6" lengthAdjust="spacingAndGlyphs" transform="translate(749.5,248.6) rotate(-90)">Magnitude (dB)</text>
<rect x="0" y="340" width="1894" height="6" fill="#848484" />
<rect x="0" y="346" width="1894" height="48.8" fill="#262626" />
<rect x="0" y="394.8" width="1894" height="1.5" fill="#f4f4f4" />
<text x="11" y="381" font-size="20" fill="#fff" text-anchor="start" font-weight="normal" font-style="italic" textLength="50" lengthAdjust="spacingAndGlyphs" >DAB+</text>
<rect x="81.8" y="360" width="73.2" height="25.5" rx="3" fill="none" stroke="#9a9a9a" stroke-width="1"/>
<text x="85.3" y="377" font-size="15.5" fill="#fff" text-anchor="start" font-weight="normal" font-style="normal" textLength="26.1" lengthAdjust="spacingAndGlyphs" >10A</text>
<path d="M130 368 L142 368 L136 375 Z" fill="#fff"/>
<rect x="169" y="346" width="1.2" height="48.8" fill="#e8e8e8" />
<rect x="170.2" y="346" width="106.8" height="48.8" fill="#a81818" />
<rect x="277" y="346" width="442" height="48.8" fill="#2d2d2d" />
<text x="189.6" y="379" font-size="20" fill="#ff7070" text-anchor="start" font-weight="normal" font-style="normal" textLength="78.3" lengthAdjust="spacingAndGlyphs" >EId: 11FB</text>
<text x="294" y="379" font-size="20" fill="#eaea30" text-anchor="start" font-weight="normal" font-style="normal" textLength="73.6" lengthAdjust="spacingAndGlyphs" >NDR HH</text>
<text x="393.8" y="379.2" font-size="20" fill="#f0f0f0" text-anchor="start" font-weight="normal" font-style="normal" textLength="203.4" lengthAdjust="spacingAndGlyphs" xml:space="preserve">2020-07-16  06:59:15 Z</text>
<rect x="719" y="346" width="3" height="48.8" fill="#f4f4f4" />
<rect x="735.5" y="359.5" width="30" height="26" rx="3" fill="none" stroke="#8a8a8a" stroke-width="1"/>
<path d="M744 368 L756 368 L750 375 Z" fill="#fff"/>
<circle cx="809.8" cy="372.5" r="14.2" fill="#2a64a0" />
<circle cx="809.8" cy="372.5" r="6" fill="#ff0000" />
<circle cx="853.9" cy="372.5" r="14.2" fill="#1d4266" />
<rect x="848.2" y="367.2" width="11" height="11.6" fill="#141414" />
<rect x="1837.5" y="357.5" width="70" height="26" rx="3" fill="none" stroke="#a0a0a0" stroke-width="1.2"/>
<text x="1840" y="376" font-size="15.5" fill="#fff" text-anchor="start" font-weight="normal" font-style="normal" textLength="29" lengthAdjust="spacingAndGlyphs" >DAB</text>
<path d="M1882 367 L1894 367 L1894 374 L1888 374 Z" fill="#fff"/>
<rect x="0" y="396.3" width="214" height="42.7" fill="#0f2c4e" />
<rect x="0" y="439" width="214" height="511" fill="#1b5887" />
<clipPath id="c1"><rect x="0" y="396" width="214" height="50"/></clipPath>
<text x="5.3" y="426.6" font-size="24" fill="#f0f020" text-anchor="start" font-weight="normal" font-style="normal" textLength="209.5" lengthAdjust="spacingAndGlyphs" clip-path="url(#c1)">No Service Select</text>
<rect x="214" y="396.3" width="6.5" height="554" fill="#eceef4" />
<text x="6.3" y="464.6" font-size="19.2" fill="#fff" text-anchor="start" font-weight="normal" font-style="normal" >NDR 2 HH</text>
<text x="6.3" y="496.1" font-size="19.2" fill="#fff" text-anchor="start" font-weight="normal" font-style="normal" >NDR 90,3</text>
<text x="6.3" y="527.6" font-size="19.2" fill="#fff" text-anchor="start" font-weight="normal" font-style="normal" >NDR Blue</text>
<text x="6.3" y="559.1" font-size="19.2" fill="#fff" text-anchor="start" font-weight="normal" font-style="normal" >NDR Info HH</text>
<text x="6.3" y="590.6" font-size="19.2" fill="#fff" text-anchor="start" font-weight="normal" font-style="normal" >NDR Info Spezial</text>
<text x="6.3" y="622.1" font-size="19.2" fill="#fff" text-anchor="start" font-weight="normal" font-style="normal" >NDR Kultur</text>
<text x="6.3" y="653.6" font-size="19.2" fill="#fff" text-anchor="start" font-weight="normal" font-style="normal" >NDR Plus</text>
<text x="6.3" y="685.1" font-size="19.2" fill="#fff" text-anchor="start" font-weight="normal" font-style="normal" >N-JOY</text>
<rect x="220.5" y="396.3" width="226.5" height="42.7" fill="#0f2c4e" />
<rect x="220.5" y="439" width="226.5" height="511" fill="#1b5887" />
<text x="227.2" y="426.6" font-size="24" fill="#fff" text-anchor="start" font-weight="normal" font-style="normal" textLength="179.6" lengthAdjust="spacingAndGlyphs" >Service Quality</text>
<rect x="447" y="396.3" width="4.2" height="554" fill="#c3cad6" />
<text x="233.5" y="474.8" font-size="17.5" fill="#fff" text-anchor="start" font-weight="normal" font-style="normal" textLength="67.5" lengthAdjust="spacingAndGlyphs" >SNR (dB)</text>
<rect x="383" y="452.2" width="50" height="31.5" fill="#888888" />
<rect x="383" y="452.2" width="10" height="31.5" fill="#ff0000" />
<text x="408" y="474.2" font-size="15" fill="#fff" text-anchor="middle" font-weight="normal" font-style="normal" >6.8</text>
<text x="233.5" y="513.3" font-size="17.5" fill="#fff" text-anchor="start" font-weight="normal" font-style="normal" textLength="76.7" lengthAdjust="spacingAndGlyphs" >FIC (ok %)</text>
<rect x="383" y="490.5" width="50" height="31.5" fill="#888888" />
<rect x="383" y="490.5" width="44.3" height="31.5" fill="#ffa500" />
<text x="408" y="512.5" font-size="15" fill="#fff" text-anchor="middle" font-weight="normal" font-style="normal" >87</text>
<text x="233.5" y="551.8" font-size="17.5" fill="#fff" text-anchor="start" font-weight="normal" font-style="normal" textLength="72.4" lengthAdjust="spacingAndGlyphs" >RS (ok %)</text>
<rect x="383" y="529.6" width="50" height="31.5" fill="#888888" />
<text x="233.5" y="590.3" font-size="17.5" fill="#fff" text-anchor="start" font-weight="normal" font-style="normal" textLength="92.3" lengthAdjust="spacingAndGlyphs" >Null Symbol</text>
<rect x="383" y="568" width="50" height="31.5" fill="#888888" />
<rect x="383" y="568" width="50" height="31.5" fill="#008000" />
<text x="233.5" y="628.8" font-size="17.5" fill="#fff" text-anchor="start" font-weight="normal" font-style="normal" textLength="132.1" lengthAdjust="spacingAndGlyphs" >SymbolTime (ms)</text>
<rect x="383" y="606" width="50" height="31.5" fill="#888888" />
<rect x="383" y="606" width="8.1" height="31.5" fill="#008000" />
<text x="408" y="628" font-size="15" fill="#fff" text-anchor="middle" font-weight="normal" font-style="normal" >0.28</text>
<text x="233.5" y="667.3" font-size="17.5" fill="#fff" text-anchor="start" font-weight="normal" font-style="normal" textLength="122.3" lengthAdjust="spacingAndGlyphs" >FrameTime (ms)</text>
<rect x="383" y="644.5" width="50" height="31.5" fill="#888888" />
<rect x="383" y="644.5" width="32" height="31.5" fill="#008000" />
<text x="408" y="666.5" font-size="15" fill="#fff" text-anchor="middle" font-weight="normal" font-style="normal" >96.0</text>
<rect x="451.2" y="396.3" width="466" height="42.7" fill="#0f2c4e" />
<rect x="451.2" y="439" width="466" height="511" fill="#1b5887" />
<path d="M461 439.5 L461 409.2 Q461 405.2 465 405.2 L521 405.2 Q535 405.2 535 419.2 L535 439.5 Z" fill="#858585"/>
<path d="M591 439.5 L591 409.2 Q591 405.2 595 405.2 L663.6 405.2 Q677.6 405.2 677.6 419.2 L677.6 439.5 Z" fill="#858585"/>
<path d="M679 439.5 L679 409.2 Q679 405.2 683 405.2 L737 405.2 Q751 405.2 751 419.2 L751 439.5 Z" fill="#858585"/>
<path d="M752 439.5 L752 409.2 Q752 405.2 756 405.2 L844.4 405.2 Q858.4 405.2 858.4 419.2 L858.4 439.5 Z" fill="#858585"/>
<path d="M536.4 439.5 L536.4 409.2 Q536.4 405.2 540.4 405.2 L576 405.2 Q590 405.2 590 419.2 L590 439.5 Z" fill="#1b5887"/>
<text x="477" y="431.6" font-size="21" fill="#e6e6e6" text-anchor="start" font-weight="normal" font-style="normal" textLength="41.7" lengthAdjust="spacingAndGlyphs" >Sync</text>
<text x="552.2" y="431.6" font-size="21" fill="#fff" text-anchor="start" font-weight="normal" font-style="normal" textLength="21.9" lengthAdjust="spacingAndGlyphs" >TII</text>
<text x="607.6" y="431.6" font-size="21" fill="#e6e6e6" text-anchor="start" font-weight="normal" font-style="normal" textLength="54.7" lengthAdjust="spacingAndGlyphs" >Audio</text>
<text x="695.5" y="431.6" font-size="21" fill="#e6e6e6" text-anchor="start" font-weight="normal" font-style="normal" textLength="39.6" lengthAdjust="spacingAndGlyphs" >AAC</text>
<text x="768.1" y="431.6" font-size="21" fill="#e6e6e6" text-anchor="start" font-weight="normal" font-style="normal" textLength="73.7" lengthAdjust="spacingAndGlyphs" >Options</text>
<circle cx="500.2" cy="457.5" r="6" fill="#ff0000" />
<rect x="531" y="451.4" width="10.6" height="11.9" fill="#0f2b4b" />
<rect x="469" y="475.2" width="310" height="1.2" fill="#8fb2d2" />
<rect x="791" y="439" width="1" height="37" fill="#5f87ad" />
<text x="799" y="477.8" font-size="18" fill="#fff" text-anchor="start" font-weight="normal" font-style="normal" textLength="75.2" lengthAdjust="spacingAndGlyphs" >Threshold</text>
<text x="469.7" y="516" font-size="18" fill="#fff" text-anchor="start" font-weight="normal" font-style="normal" textLength="58.8" lengthAdjust="spacingAndGlyphs" >Pattern</text>
<text x="554" y="516" font-size="18" fill="#fff" text-anchor="start" font-weight="normal" font-style="normal" textLength="56.6" lengthAdjust="spacingAndGlyphs" >MainId</text>
<text x="636" y="516" font-size="18" fill="#fff" text-anchor="start" font-weight="normal" font-style="normal" textLength="47.2" lengthAdjust="spacingAndGlyphs" >SubId</text>
<text x="708.6" y="516" font-size="18" fill="#fff" text-anchor="start" font-weight="normal" font-style="normal" textLength="69.8" lengthAdjust="spacingAndGlyphs" >Strength</text>
<rect x="469" y="520.8" width="310" height="1.2" fill="#a8c4de" />
<text x="471.9" y="552.8" font-size="18" fill="#fff" text-anchor="start" font-weight="normal" font-style="normal" textLength="35.6" lengthAdjust="spacingAndGlyphs" >0x17</text>
<text x="556.7" y="552.8" font-size="18" fill="#fff" text-anchor="start" font-weight="normal" font-style="normal" textLength="7.7" lengthAdjust="spacingAndGlyphs" >1</text>
<text x="639.4" y="552.8" font-size="18" fill="#fff" text-anchor="start" font-weight="normal" font-style="normal" textLength="7.1" lengthAdjust="spacingAndGlyphs" >1</text>
<text x="711.4" y="552.8" font-size="18" fill="#fff" text-anchor="start" font-weight="normal" font-style="normal" textLength="31.4" lengthAdjust="spacingAndGlyphs" >0.94</text>
<rect x="831.3" y="503" width="2.6" height="135" fill="#e6e6e6" />
<circle cx="832.6" cy="642.5" r="8" fill="url(#thumb)"/>
<text x="815.4" y="676.7" font-size="18" fill="#fff" text-anchor="start" font-weight="normal" font-style="normal" textLength="31.4" lengthAdjust="spacingAndGlyphs" >0.02</text>
<rect x="917" y="396.3" width="6.2" height="554" fill="#eef0f4" />
<rect x="923.2" y="396.3" width="970.8" height="24.5" fill="#0f2c4e" />
<text x="1288.2" y="414" font-size="18" fill="#fff" text-anchor="start" font-weight="normal" font-style="normal" textLength="264.6" lengthAdjust="spacingAndGlyphs" >Channel Impulse Response (CIR)</text>
<path d="M1875 401.8 L1890 401.8 L1882.5 414.6 Z" fill="none" stroke="#dfe6ee" stroke-width="1.1"/>
<circle cx="944.2" cy="444.2" r="8.3" fill="#e0e0e0" />
<text x="957" y="449.8" font-size="15" fill="#fff" text-anchor="start" font-weight="normal" font-style="normal" textLength="42.6" lengthAdjust="spacingAndGlyphs" >Freeze</text>
<circle cx="1033" cy="444.2" r="8.3" fill="#e0e0e0" />
<text x="1046.5" y="449.8" font-size="15" fill="#fff" text-anchor="start" font-weight="normal" font-style="normal" textLength="55.4" lengthAdjust="spacingAndGlyphs" >Gradient</text>
<rect x="1116" y="423" width="5.8" height="184.6" rx="2.9" fill="#b4b4b4"/>
<text x="942.2" y="501" font-size="15" fill="#fff" text-anchor="start" font-weight="normal" font-style="normal" textLength="109.9" lengthAdjust="spacingAndGlyphs" >Smoothing Level</text>
<rect x="944.3" y="511.5" width="1.4" height="4.5" fill="#cfcfcf" />
<rect x="960.55" y="511.5" width="1.4" height="4.5" fill="#cfcfcf" />
<rect x="976.8" y="511.5" width="1.4" height="4.5" fill="#cfcfcf" />
<rect x="993.05" y="511.5" width="1.4" height="4.5" fill="#cfcfcf" />
<rect x="1009.3" y="511.5" width="1.4" height="4.5" fill="#cfcfcf" />
<rect x="1025.55" y="511.5" width="1.4" height="4.5" fill="#cfcfcf" />
<rect x="1041.8" y="511.5" width="1.4" height="4.5" fill="#cfcfcf" />
<rect x="1058.05" y="511.5" width="1.4" height="4.5" fill="#cfcfcf" />
<rect x="1074.3" y="511.5" width="1.4" height="4.5" fill="#cfcfcf" />
<rect x="1090.55" y="511.5" width="1.4" height="4.5" fill="#cfcfcf" />
<rect x="1106.8" y="511.5" width="1.4" height="4.5" fill="#cfcfcf" />
<rect x="936.5" y="523.2" width="171" height="3" fill="#e6e6e6" />
<circle cx="1009.5" cy="524.6" r="8" fill="url(#thumb)"/>
<text x="942.2" y="567.8" font-size="15" fill="#fff" text-anchor="start" font-weight="normal" font-style="normal" textLength="51.7" lengthAdjust="spacingAndGlyphs" >Zoom X</text>
<rect x="936.5" y="585.7" width="171" height="3" fill="#e6e6e6" />
<circle cx="944.2" cy="587.1" r="8" fill="url(#thumb)"/>
<text x="942.2" y="630.9" font-size="15" fill="#fff" text-anchor="start" font-weight="normal" font-style="normal" textLength="51.1" lengthAdjust="spacingAndGlyphs" >Zoom Y</text>
<rect x="936.5" y="648.2" width="171" height="3" fill="#e6e6e6" />
<circle cx="944.2" cy="649.6" r="8" fill="url(#thumb)"/>
<rect x="1128.5" y="421" width="1" height="260" fill="#262626" />
<rect x="1261" y="440.5" width="137.5" height="184.70000000000005" fill="#3c3c3c" />
<rect x="1247" y="478" width="619" height="1" fill="rgba(255,255,255,0.58)" />
<rect x="1247" y="515" width="619" height="1" fill="rgba(255,255,255,0.58)" />
<rect x="1247" y="552" width="619" height="1" fill="rgba(255,255,255,0.58)" />
<rect x="1247" y="589" width="619" height="1" fill="rgba(255,255,255,0.58)" />
<rect x="1274" y="442" width="1" height="183" fill="rgba(255,255,255,0.58)" />
<rect x="1315" y="442" width="1" height="183" fill="rgba(255,255,255,0.58)" />
<rect x="1357" y="442" width="1" height="183" fill="rgba(255,255,255,0.58)" />
<rect x="1439" y="442" width="1" height="183" fill="rgba(255,255,255,0.58)" />
<rect x="1481" y="442" width="1" height="183" fill="rgba(255,255,255,0.58)" />
<rect x="1522" y="442" width="1" height="183" fill="rgba(255,255,255,0.58)" />
<rect x="1564" y="442" width="1" height="183" fill="rgba(255,255,255,0.58)" />
<rect x="1605" y="442" width="1" height="183" fill="rgba(255,255,255,0.58)" />
<rect x="1646" y="442" width="1" height="183" fill="rgba(255,255,255,0.58)" />
<rect x="1688" y="442" width="1" height="183" fill="rgba(255,255,255,0.58)" />
<rect x="1729" y="442" width="1" height="183" fill="rgba(255,255,255,0.58)" />
<rect x="1770" y="442" width="1" height="183" fill="rgba(255,255,255,0.58)" />
<rect x="1812" y="442" width="1" height="183" fill="rgba(255,255,255,0.58)" />
<rect x="1853" y="442" width="1" height="183" fill="rgba(255,255,255,0.58)" />
<polyline points="1247.0,592.0 1248.0,592.0 1249.0,599.3 1250.0,609.2 1251.0,611.9 1252.0,606.8 1253.0,600.5 1254.0,602.4 1255.0,613.9 1256.0,619.3 1257.0,608.6 1258.0,598.9 1259.0,604.5 1260.0,612.7 1261.0,605.1 1262.0,597.0 1263.0,598.1 1264.0,595.7 1265.0,594.7 1266.0,599.8 1267.0,601.0 1268.0,607.2 1269.0,608.3 1270.0,605.5 1271.0,608.3 1272.0,605.6 1273.0,598.0 1274.0,592.6 1275.0,594.5 1276.0,597.7 1277.0,598.5 1278.0,600.5 1279.0,602.5 1280.0,598.8 1281.0,595.4 1282.0,593.0 1283.0,590.8 1284.0,595.1 1285.0,599.7 1286.0,603.4 1287.0,610.4 1288.0,602.8 1289.0,591.5 1290.0,594.3 1291.0,596.0 1292.0,596.9 1293.0,593.0 1294.0,587.9 1295.0,591.6 1296.0,597.5 1297.0,596.7 1298.0,595.0 1299.0,596.9 1300.0,595.6 1301.0,593.7 1302.0,598.9 1303.0,606.2 1304.0,613.1 1305.0,616.2 1306.0,612.3 1307.0,608.3 1308.0,604.3 1309.0,598.9 1310.0,599.9 1311.0,601.1 1312.0,595.5 1313.0,594.7 1314.0,593.9 1315.0,596.1 1316.0,594.3 1317.0,595.1 1318.0,597.1 1319.0,594.5 1320.0,594.6 1321.0,594.7 1322.0,587.6 1323.0,584.9 1324.0,592.1 1325.0,601.6 1326.0,601.1 1327.0,592.7 1328.0,594.2 1329.0,598.7 1330.0,593.0 1331.0,592.6 1332.0,596.2 1333.0,594.6 1334.0,597.0 1335.0,598.7 1336.0,598.4 1337.0,600.9 1338.0,605.2 1339.0,598.3 1340.0,587.3 1341.0,584.0 1342.0,593.0 1343.0,599.6 1344.0,601.9 1345.0,601.1 1346.0,598.8 1347.0,596.9 1348.0,598.8 1349.0,603.4 1350.0,602.5 1351.0,608.2 1352.0,615.1 1353.0,606.8 1354.0,600.2 1355.0,610.2 1356.0,608.1 1357.0,599.3 1358.0,602.2 1359.0,601.1 1360.0,596.2 1361.0,592.9 1362.0,595.4 1363.0,602.3 1364.0,606.5 1365.0,604.7 1366.0,608.6 1367.0,608.0 1368.0,598.6 1369.0,597.7 1370.0,595.6 1371.0,590.9 1372.0,591.1 1373.0,595.8 1374.0,596.8 1375.0,593.5 1376.0,597.9 1377.0,602.3 1378.0,603.3 1379.0,603.6 1380.0,602.4 1381.0,605.8 1382.0,610.3 1383.0,606.0 1384.0,599.6 1385.0,598.0 1386.0,592.4 1387.0,594.8 1388.0,600.1 1389.0,605.0 1390.0,604.0 1391.0,593.0 1392.0,589.5 1393.0,600.4 1394.0,597.4 1395.0,584.1 1396.0,582.1 1397.0,562.7 1398.0,526.9 1399.0,520.9 1400.0,542.0 1401.0,561.5 1402.0,566.9 1403.0,570.3 1404.0,575.3 1405.0,575.9 1406.0,577.9 1407.0,587.1 1408.0,596.5 1409.0,592.4 1410.0,583.8 1411.0,586.7 1412.0,591.4 1413.0,590.9 1414.0,588.5 1415.0,594.9 1416.0,611.0 1417.0,610.6 1418.0,603.6 1419.0,609.7 1420.0,605.4 1421.0,590.6 1422.0,591.6 1423.0,599.5 1424.0,604.3 1425.0,605.0 1426.0,604.5 1427.0,609.0 1428.0,621.1 1429.0,621.0 1430.0,606.2 1431.0,606.3 1432.0,616.3 1433.0,609.1 1434.0,602.6 1435.0,607.8 1436.0,614.2 1437.0,617.0 1438.0,609.4 1439.0,608.0 1440.0,610.3 1441.0,616.9 1442.0,618.4 1443.0,610.5 1444.0,597.8 1445.0,601.4 1446.0,609.2 1447.0,600.5 1448.0,590.6 1449.0,596.8 1450.0,607.4 1451.0,606.0 1452.0,601.6 1453.0,604.5 1454.0,606.1 1455.0,598.8 1456.0,603.5 1457.0,616.3 1458.0,619.7 1459.0,612.1 1460.0,608.4 1461.0,604.6 1462.0,598.8 1463.0,594.9 1464.0,592.2 1465.0,594.3 1466.0,603.7 1467.0,612.8 1468.0,607.9 1469.0,605.7 1470.0,606.9 1471.0,604.7 1472.0,598.8 1473.0,591.6 1474.0,597.7 1475.0,599.4 1476.0,588.7 1477.0,591.7 1478.0,603.7 1479.0,596.7 1480.0,588.4 1481.0,590.9 1482.0,593.9 1483.0,598.8 1484.0,601.4 1485.0,596.4 1486.0,592.4 1487.0,595.6 1488.0,600.8 1489.0,599.5 1490.0,594.2 1491.0,589.8 1492.0,583.9 1493.0,588.7 1494.0,600.4 1495.0,599.0 1496.0,587.6 1497.0,585.5 1498.0,592.4 1499.0,596.0 1500.0,595.3 1501.0,599.7 1502.0,605.1 1503.0,606.5 1504.0,609.4 1505.0,610.7 1506.0,608.2 1507.0,603.5 1508.0,597.0 1509.0,597.7 1510.0,599.4 1511.0,600.6 1512.0,605.3 1513.0,605.2 1514.0,591.9 1515.0,592.1 1516.0,602.2 1517.0,605.8 1518.0,601.6 1519.0,599.9 1520.0,609.8 1521.0,609.4 1522.0,600.5 1523.0,597.6 1524.0,598.1 1525.0,598.4 1526.0,598.3 1527.0,599.4 1528.0,607.8 1529.0,608.8 1530.0,606.2 1531.0,599.5 1532.0,591.4 1533.0,598.9 1534.0,604.1 1535.0,602.6 1536.0,601.9 1537.0,598.6 1538.0,601.1 1539.0,596.2 1540.0,589.9 1541.0,591.2 1542.0,596.5 1543.0,601.4 1544.0,594.7 1545.0,590.8 1546.0,597.7 1547.0,600.9 1548.0,603.3 1549.0,600.1 1550.0,593.1 1551.0,594.2 1552.0,602.9 1553.0,605.9 1554.0,606.4 1555.0,612.7 1556.0,615.9 1557.0,605.0 1558.0,592.2 1559.0,588.5 1560.0,588.4 1561.0,595.4 1562.0,594.0 1563.0,596.4 1564.0,596.6 1565.0,589.5 1566.0,596.9 1567.0,616.9 1568.0,618.1 1569.0,611.6 1570.0,613.3 1571.0,615.7 1572.0,613.7 1573.0,602.2 1574.0,597.4 1575.0,599.0 1576.0,599.5 1577.0,597.2 1578.0,599.4 1579.0,601.4 1580.0,603.6 1581.0,604.7 1582.0,599.1 1583.0,605.4 1584.0,613.3 1585.0,612.9 1586.0,614.4 1587.0,617.0 1588.0,616.6 1589.0,608.9 1590.0,596.8 1591.0,594.7 1592.0,596.5 1593.0,591.7 1594.0,592.3 1595.0,590.6 1596.0,593.0 1597.0,601.9 1598.0,605.0 1599.0,599.3 1600.0,596.5 1601.0,596.8 1602.0,599.5 1603.0,601.7 1604.0,600.8 1605.0,600.0 1606.0,604.6 1607.0,607.1 1608.0,602.8 1609.0,595.7 1610.0,594.2 1611.0,599.3 1612.0,598.5 1613.0,592.7 1614.0,579.0 1615.0,578.5 1616.0,596.2 1617.0,609.4 1618.0,612.7 1619.0,608.3 1620.0,602.6 1621.0,597.4 1622.0,595.0 1623.0,599.1 1624.0,600.9 1625.0,600.9 1626.0,604.2 1627.0,606.0 1628.0,605.0 1629.0,599.9 1630.0,593.1 1631.0,592.4 1632.0,600.3 1633.0,606.3 1634.0,607.1 1635.0,609.0 1636.0,610.2 1637.0,609.9 1638.0,603.5 1639.0,599.4 1640.0,604.5 1641.0,609.3 1642.0,604.6 1643.0,602.2 1644.0,603.8 1645.0,605.1 1646.0,606.3 1647.0,611.3 1648.0,605.7 1649.0,602.0 1650.0,615.6 1651.0,618.8 1652.0,615.4 1653.0,610.5 1654.0,605.1 1655.0,606.2 1656.0,611.0 1657.0,614.9 1658.0,613.6 1659.0,608.5 1660.0,602.0 1661.0,605.1 1662.0,614.1 1663.0,613.0 1664.0,603.2 1665.0,602.4 1666.0,611.2 1667.0,610.6 1668.0,603.1 1669.0,594.3 1670.0,594.9 1671.0,598.4 1672.0,598.3 1673.0,596.1 1674.0,604.1 1675.0,607.9 1676.0,600.6 1677.0,594.2 1678.0,598.5 1679.0,603.0 1680.0,596.9 1681.0,599.5 1682.0,602.3 1683.0,600.8 1684.0,599.8 1685.0,603.5 1686.0,605.7 1687.0,606.0 1688.0,608.1 1689.0,616.6 1690.0,617.0 1691.0,611.6 1692.0,600.2 1693.0,600.3 1694.0,609.3 1695.0,610.5 1696.0,611.6 1697.0,608.3 1698.0,603.6 1699.0,600.6 1700.0,601.9 1701.0,602.0 1702.0,601.9 1703.0,599.0 1704.0,607.2 1705.0,610.7 1706.0,600.4 1707.0,599.1 1708.0,602.0 1709.0,606.2 1710.0,612.4 1711.0,609.5 1712.0,604.5 1713.0,608.5 1714.0,612.5 1715.0,609.5 1716.0,605.5 1717.0,599.0 1718.0,591.8 1719.0,597.4 1720.0,610.9 1721.0,613.2 1722.0,606.4 1723.0,602.2 1724.0,597.7 1725.0,597.1 1726.0,596.0 1727.0,596.1 1728.0,593.9 1729.0,595.3 1730.0,597.9 1731.0,598.0 1732.0,601.2 1733.0,600.0 1734.0,602.4 1735.0,600.6 1736.0,589.2 1737.0,588.0 1738.0,602.6 1739.0,614.6 1740.0,619.8 1741.0,615.2 1742.0,608.1 1743.0,604.1 1744.0,610.2 1745.0,611.0 1746.0,603.2 1747.0,601.6 1748.0,606.7 1749.0,600.1 1750.0,590.4 1751.0,597.5 1752.0,605.4 1753.0,605.0 1754.0,605.7 1755.0,605.0 1756.0,598.8 1757.0,601.0 1758.0,598.5 1759.0,596.0 1760.0,604.3 1761.0,608.9 1762.0,595.5 1763.0,585.3 1764.0,595.3 1765.0,610.0 1766.0,608.9 1767.0,600.9 1768.0,598.3 1769.0,591.4 1770.0,591.4 1771.0,599.3 1772.0,599.4 1773.0,588.5 1774.0,588.8 1775.0,597.9 1776.0,602.6 1777.0,608.3 1778.0,612.4 1779.0,615.2 1780.0,615.7 1781.0,608.9 1782.0,598.1 1783.0,600.3 1784.0,608.7 1785.0,608.0 1786.0,597.1 1787.0,583.3 1788.0,583.3 1789.0,598.1 1790.0,603.7 1791.0,598.1 1792.0,590.9 1793.0,590.0 1794.0,599.5 1795.0,611.3 1796.0,612.0 1797.0,604.4 1798.0,596.5 1799.0,596.8 1800.0,609.4 1801.0,610.9 1802.0,600.5 1803.0,600.4 1804.0,599.5 1805.0,589.6 1806.0,583.3 1807.0,593.2 1808.0,600.9 1809.0,595.1 1810.0,586.8 1811.0,588.4 1812.0,606.3 1813.0,613.4 1814.0,609.0 1815.0,603.0 1816.0,603.5 1817.0,606.7 1818.0,607.8 1819.0,607.2 1820.0,605.6 1821.0,608.7 1822.0,609.6 1823.0,602.6 1824.0,597.4 1825.0,595.1 1826.0,586.8 1827.0,587.8 1828.0,594.4 1829.0,593.6 1830.0,592.8 1831.0,595.5 1832.0,596.0 1833.0,600.1 1834.0,604.1 1835.0,607.7 1836.0,607.7 1837.0,601.9 1838.0,603.9 1839.0,604.8 1840.0,603.0 1841.0,604.9 1842.0,603.2 1843.0,599.2 1844.0,604.2 1845.0,608.4 1846.0,609.8 1847.0,610.2 1848.0,603.8 1849.0,600.5 1850.0,597.1 1851.0,591.1 1852.0,588.8 1853.0,590.7 1854.0,593.6 1855.0,596.0 1856.0,604.1 1857.0,603.0 1858.0,594.3 1859.0,599.7 1860.0,604.0 1861.0,609.0 1862.0,618.4 1863.0,615.2 1864.0,607.1 1865.0,603.6" fill="none" stroke="#f2f2f2" stroke-width="1.45" stroke-linejoin="round"/>
<rect x="1247" y="440" width="619" height="2" fill="#a4a4a4" />
<rect x="1247" y="625" width="619" height="1.3" fill="#a4a4a4" />
<rect x="1865" y="440" width="2" height="186" fill="#a4a4a4" />
<rect x="1245" y="442" width="1" height="184" fill="#a4a4a4" />
<line x1="1398.5" y1="442" x2="1398.5" y2="625" stroke="#f0f060" stroke-width="1" stroke-dasharray="1,1"/>
<circle cx="1399" cy="520.9" r="5" fill="#f4f400" />
<circle cx="1413.5" cy="581.4" r="5" fill="#e81010" />
<text x="1234.9" y="445.7" font-size="15" fill="#fff" text-anchor="end" font-weight="normal" font-style="normal" >-10.0</text>
<text x="1234.9" y="482.64" font-size="15" fill="#fff" text-anchor="end" font-weight="normal" font-style="normal" >-20.0</text>
<text x="1234.9" y="519.58" font-size="15" fill="#fff" text-anchor="end" font-weight="normal" font-style="normal" >-30.0</text>
<text x="1234.9" y="556.5200000000001" font-size="15" fill="#fff" text-anchor="end" font-weight="normal" font-style="normal" >-40.0</text>
<text x="1234.9" y="593.46" font-size="15" fill="#fff" text-anchor="end" font-weight="normal" font-style="normal" >-50.0</text>
<text x="1234.9" y="630.4000000000001" font-size="15" fill="#fff" text-anchor="end" font-weight="normal" font-style="normal" >-60.0</text>
<text x="1274.3545454545454" y="641.7" font-size="13.5" fill="#fff" text-anchor="middle" font-weight="normal" font-style="normal" >-60</text>
<text x="1315.7363636363636" y="641.7" font-size="13.5" fill="#fff" text-anchor="middle" font-weight="normal" font-style="normal" >-40</text>
<text x="1357.1181818181817" y="641.7" font-size="13.5" fill="#fff" text-anchor="middle" font-weight="normal" font-style="normal" >-20</text>
<text x="1398.5" y="641.7" font-size="13.5" fill="#fff" text-anchor="middle" font-weight="normal" font-style="normal" >0</text>
<text x="1439.8818181818183" y="641.7" font-size="13.5" fill="#fff" text-anchor="middle" font-weight="normal" font-style="normal" >20</text>
<text x="1481.2636363636364" y="641.7" font-size="13.5" fill="#fff" text-anchor="middle" font-weight="normal" font-style="normal" >40</text>
<text x="1522.6454545454546" y="641.7" font-size="13.5" fill="#fff" text-anchor="middle" font-weight="normal" font-style="normal" >60</text>
<text x="1564.0272727272727" y="641.7" font-size="13.5" fill="#fff" text-anchor="middle" font-weight="normal" font-style="normal" >80</text>
<text x="1605.409090909091" y="641.7" font-size="13.5" fill="#fff" text-anchor="middle" font-weight="normal" font-style="normal" >100</text>
<text x="1646.790909090909" y="641.7" font-size="13.5" fill="#fff" text-anchor="middle" font-weight="normal" font-style="normal" >120</text>
<text x="1688.1727272727273" y="641.7" font-size="13.5" fill="#fff" text-anchor="middle" font-weight="normal" font-style="normal" >140</text>
<text x="1729.5545454545454" y="641.7" font-size="13.5" fill="#fff" text-anchor="middle" font-weight="normal" font-style="normal" >160</text>
<text x="1770.9363636363637" y="641.7" font-size="13.5" fill="#fff" text-anchor="middle" font-weight="normal" font-style="normal" >180</text>
<text x="1812.3181818181818" y="641.7" font-size="13.5" fill="#fff" text-anchor="middle" font-weight="normal" font-style="normal" >200</text>
<text x="1853.7" y="641.7" font-size="13.5" fill="#fff" text-anchor="middle" font-weight="normal" font-style="normal" >220</text>
<text x="1462.4" y="665.8" font-size="16" fill="#fff" text-anchor="start" font-weight="normal" font-style="normal" textLength="187" lengthAdjust="spacingAndGlyphs" >Distance Difference (km)</text>
<text x="0" y="0" font-size="16" font-weight="bold" fill="#fff" textLength="113.7" lengthAdjust="spacingAndGlyphs" transform="translate(1177,590.5) rotate(-90)">Magnitude (dB)</text>
<rect x="923.2" y="681" width="970.8" height="6" fill="#8a8e90" />
<rect x="923.2" y="687" width="970.8" height="26" fill="#0f2c4e" />
<text x="1377.6" y="705.5" font-size="18" fill="#fff" text-anchor="start" font-weight="normal" font-style="normal" textLength="86.4" lengthAdjust="spacingAndGlyphs" >TII Carriers</text>
<path d="M1875 693.8 L1890 693.8 L1882.5 706.6 Z" fill="none" stroke="#dfe6ee" stroke-width="1.1"/>
<rect x="1034" y="768" width="822" height="1" fill="rgba(255,255,255,0.58)" />
<rect x="1034" y="803" width="822" height="1" fill="rgba(255,255,255,0.58)" />
<rect x="1034" y="839" width="822" height="1" fill="rgba(255,255,255,0.58)" />
<rect x="1034" y="874" width="822" height="1" fill="rgba(255,255,255,0.58)" />
<rect x="1083" y="734" width="1" height="176" fill="rgba(255,255,255,0.58)" />
<rect x="1163" y="734" width="1" height="176" fill="rgba(255,255,255,0.58)" />
<rect x="1244" y="734" width="1" height="176" fill="rgba(255,255,255,0.58)" />
<rect x="1324" y="734" width="1" height="176" fill="rgba(255,255,255,0.58)" />
<rect x="1405" y="734" width="1" height="176" fill="rgba(255,255,255,0.58)" />
<rect x="1485" y="734" width="1" height="176" fill="rgba(255,255,255,0.58)" />
<rect x="1566" y="734" width="1" height="176" fill="rgba(255,255,255,0.58)" />
<rect x="1646" y="734" width="1" height="176" fill="rgba(255,255,255,0.58)" />
<rect x="1726" y="734" width="1" height="176" fill="rgba(255,255,255,0.58)" />
<rect x="1807" y="734" width="1" height="176" fill="rgba(255,255,255,0.58)" />
<path d="M1194.5 909.8 L1195.1000000000001 845 L1195.7 842 L1196.3 845 L1196.9 909.8 Z" fill="#f0f0f0"/>
<path d="M1215.0 909.8 L1215.6000000000001 903.3 L1216.2 900.3 L1216.8 903.3 L1217.4 909.8 Z" fill="#f0f0f0"/>
<path d="M1224.8 909.8 L1225.4 910 L1226 907 L1226.6 910 L1227.2 909.8 Z" fill="#f0f0f0"/>
<path d="M1233.8 909.8 L1234.4 827.4 L1235 824.4 L1235.6 827.4 L1236.2 909.8 Z" fill="#f0f0f0"/>
<path d="M1252.8 909.8 L1253.4 821.7 L1254 818.7 L1254.6 821.7 L1255.2 909.8 Z" fill="#f0f0f0"/>
<path d="M1272.3999999999999 909.8 L1273.0 813.2 L1273.6 810.2 L1274.1999999999998 813.2 L1274.8 909.8 Z" fill="#f0f0f0"/>
<path d="M1349.3999999999999 909.8 L1350.0 787.6 L1350.6 784.6 L1351.1999999999998 787.6 L1351.8 909.8 Z" fill="#f0f0f0"/>
<path d="M1388.1 909.8 L1388.7 770.3 L1389.3 767.3 L1389.8999999999999 770.3 L1390.5 909.8 Z" fill="#f0f0f0"/>
<path d="M1407.1 909.8 L1407.7 776.8 L1408.3 773.8 L1408.8999999999999 776.8 L1409.5 909.8 Z" fill="#f0f0f0"/>
<path d="M1426.7 909.8 L1427.3000000000002 737 L1427.9 734 L1428.5 737 L1429.1000000000001 909.8 Z" fill="#f0f0f0"/>
<path d="M1464.8 909.8 L1465.4 904.7 L1466 901.7 L1466.6 904.7 L1467.2 909.8 Z" fill="#f0f0f0"/>
<path d="M1504.3 909.8 L1504.9 774 L1505.5 771 L1506.1 774 L1506.7 909.8 Z" fill="#f0f0f0"/>
<path d="M1542.8 909.8 L1543.4 771.7 L1544 768.7 L1544.6 771.7 L1545.2 909.8 Z" fill="#f0f0f0"/>
<path d="M1562.5 909.8 L1563.1000000000001 775 L1563.7 772 L1564.3 775 L1564.9 909.8 Z" fill="#f0f0f0"/>
<path d="M1581.6 909.8 L1582.2 773.4 L1582.8 770.4 L1583.3999999999999 773.4 L1584.0 909.8 Z" fill="#f0f0f0"/>
<path d="M1613.3999999999999 909.8 L1614.0 905.3 L1614.6 902.3 L1615.1999999999998 905.3 L1615.8 909.8 Z" fill="#f0f0f0"/>
<path d="M1658.8 909.8 L1659.4 760.3 L1660 757.3 L1660.6 760.3 L1661.2 909.8 Z" fill="#f0f0f0"/>
<path d="M1697.6 909.8 L1698.2 777.4 L1698.8 774.4 L1699.3999999999999 777.4 L1700.0 909.8 Z" fill="#f0f0f0"/>
<path d="M1716.8 909.8 L1717.4 795.8 L1718 792.8 L1718.6 795.8 L1719.2 909.8 Z" fill="#f0f0f0"/>
<path d="M1736.2 909.8 L1736.8000000000002 805.2 L1737.4 802.2 L1738.0 805.2 L1738.6000000000001 909.8 Z" fill="#f0f0f0"/>
<rect x="1034" y="732" width="823" height="2" fill="#a4a4a4" />
<rect x="1034" y="909" width="823" height="1.5" fill="#a4a4a4" />
<rect x="1034" y="907" width="103" height="1.5" fill="#8a8a8a" />
<rect x="1755" y="907" width="101" height="1.5" fill="#8a8a8a" />
<rect x="1856" y="732" width="2" height="179" fill="#a4a4a4" />
<rect x="1032" y="734" width="2" height="177" fill="#d25a4b" />
<line x1="1136.5" y1="734" x2="1136.5" y2="909" stroke="#f0f020" stroke-width="2" stroke-dasharray="2,2.5"/>
<line x1="1290.5" y1="734" x2="1290.5" y2="909" stroke="#f0f020" stroke-width="2" stroke-dasharray="2,2.5"/>
<line x1="1445.5" y1="734" x2="1445.5" y2="909" stroke="#f0f020" stroke-width="2" stroke-dasharray="2,2.5"/>
<line x1="1599.5" y1="734" x2="1599.5" y2="909" stroke="#f0f020" stroke-width="2" stroke-dasharray="2,2.5"/>
<line x1="1754.5" y1="734" x2="1754.5" y2="909" stroke="#f0f020" stroke-width="2" stroke-dasharray="2,2.5"/>
<text x="1020" y="738.3000000000001" font-size="16.5" fill="#fff" text-anchor="end" font-weight="normal" font-style="normal" >1.0</text>
<text x="1020" y="773.74" font-size="16.5" fill="#fff" text-anchor="end" font-weight="normal" font-style="normal" >0.8</text>
<text x="1020" y="809.1800000000001" font-size="16.5" fill="#fff" text-anchor="end" font-weight="normal" font-style="normal" >0.6</text>
<text x="1020" y="844.62" font-size="16.5" fill="#fff" text-anchor="end" font-weight="normal" font-style="normal" >0.4</text>
<text x="1020" y="880.06" font-size="16.5" fill="#fff" text-anchor="end" font-weight="normal" font-style="normal" >0.2</text>
<text x="1020" y="915.5" font-size="16.5" fill="#fff" text-anchor="end" font-weight="normal" font-style="normal" >0.0</text>
<text x="1083.4" y="928.5" font-size="16.5" fill="#fff" text-anchor="middle" font-weight="normal" font-style="normal" >-900</text>
<text x="1163.8333333333335" y="928.5" font-size="16.5" fill="#fff" text-anchor="middle" font-weight="normal" font-style="normal" >-700</text>
<text x="1244.2666666666667" y="928.5" font-size="16.5" fill="#fff" text-anchor="middle" font-weight="normal" font-style="normal" >-500</text>
<text x="1324.7" y="928.5" font-size="16.5" fill="#fff" text-anchor="middle" font-weight="normal" font-style="normal" >-300</text>
<text x="1405.1333333333334" y="928.5" font-size="16.5" fill="#fff" text-anchor="middle" font-weight="normal" font-style="normal" >-100</text>
<text x="1485.5666666666666" y="928.5" font-size="16.5" fill="#fff" text-anchor="middle" font-weight="normal" font-style="normal" >100</text>
<text x="1566.0" y="928.5" font-size="16.5" fill="#fff" text-anchor="middle" font-weight="normal" font-style="normal" >300</text>
<text x="1646.4333333333334" y="928.5" font-size="16.5" fill="#fff" text-anchor="middle" font-weight="normal" font-style="normal" >500</text>
<text x="1726.8666666666668" y="928.5" font-size="16.5" fill="#fff" text-anchor="middle" font-weight="normal" font-style="normal" >700</text>
<text x="1807.3" y="928.5" font-size="16.5" fill="#fff" text-anchor="middle" font-weight="normal" font-style="normal" >900</text>
<text x="1394.2" y="955.5" font-size="16.6" fill="#fff" text-anchor="start" font-weight="normal" font-style="normal" >TII Subcarrier</text>
<text x="0" y="0" font-size="16.5" font-weight="bold" fill="#fff" textLength="75.2" lengthAdjust="spacingAndGlyphs" transform="translate(977,859) rotate(-90)">Magnitude</text>
</svg>
</body></html>
